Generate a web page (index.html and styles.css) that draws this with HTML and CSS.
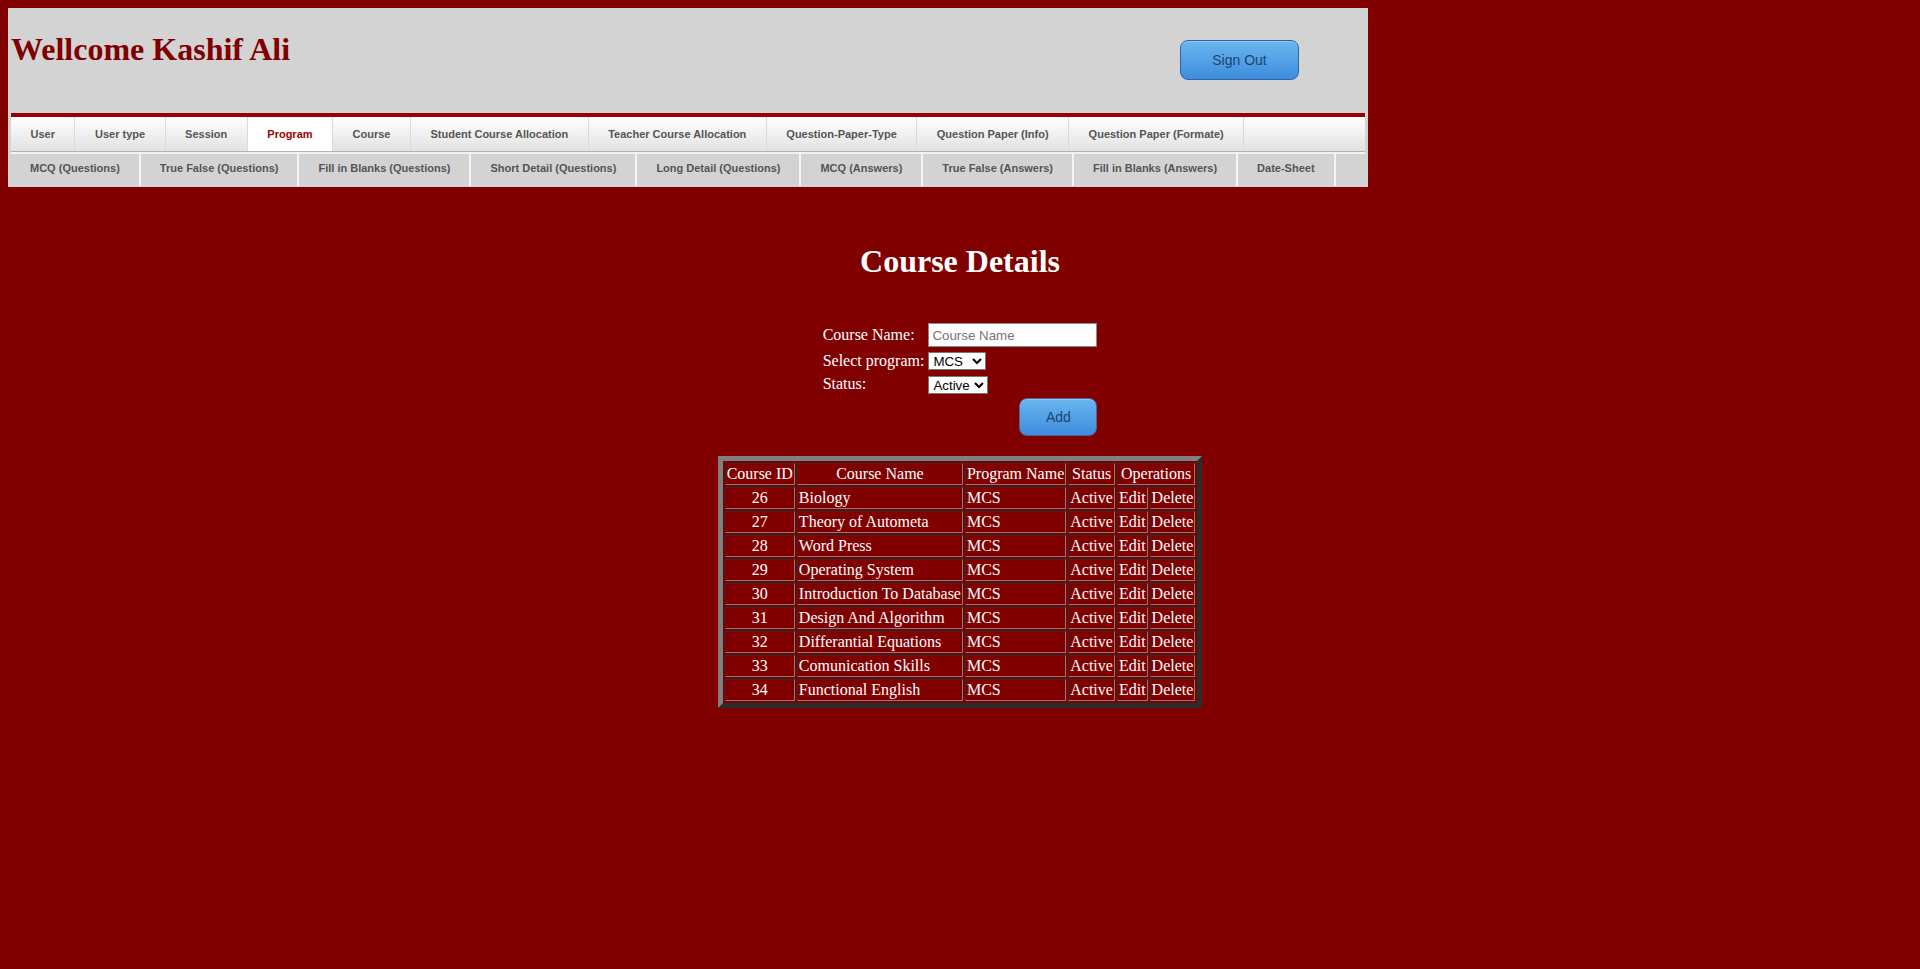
FILE: index.html
```html
<!DOCTYPE html>
<html>
<head>
<meta charset="utf-8">
<title>Course Details</title>
<link rel="stylesheet" href="styles.css">
</head>
<body>
<div class="header">
  <div class="top">
    <h1 class="welcome">Wellcome Kashif Ali</h1>
    <button class="btn signout" type="button">Sign Out</button>
  </div>
  <ul class="nav nav1">
    <li><a href="#">User</a></li>
    <li><a href="#">User type</a></li>
    <li><a href="#">Session</a></li>
    <li class="active"><a href="#">Program</a></li>
    <li><a href="#">Course</a></li>
    <li><a href="#">Student Course Allocation</a></li>
    <li><a href="#">Teacher Course Allocation</a></li>
    <li><a href="#">Question-Paper-Type</a></li>
    <li><a href="#">Question Paper (Info)</a></li>
    <li><a href="#">Question Paper (Formate)</a></li>
  </ul>
  <ul class="nav nav2">
    <li><a href="#">MCQ (Questions)</a></li>
    <li><a href="#">True False (Questions)</a></li>
    <li><a href="#">Fill in Blanks (Questions)</a></li>
    <li><a href="#">Short Detail (Questions)</a></li>
    <li><a href="#">Long Detail (Questions)</a></li>
    <li><a href="#">MCQ (Answers)</a></li>
    <li><a href="#">True False (Answers)</a></li>
    <li><a href="#">Fill in Blanks (Answers)</a></li>
    <li><a href="#">Date-Sheet</a></li>
  </ul>
</div>

<div class="content">
  <h1 class="page-title">Course Details</h1>
  <table class="form">
    <tr>
      <td>Course Name:</td>
      <td><input class="text-input" type="text" placeholder="Course Name"></td>
    </tr>
    <tr>
      <td>Select program:</td>
      <td><select class="sel sel-program"><option>MCS</option><option>BSCS</option></select></td>
    </tr>
    <tr>
      <td>Status:</td>
      <td><select class="sel sel-status"><option>Active</option><option>Block</option></select></td>
    </tr>
    <tr>
      <td></td>
      <td class="right"><button class="btn add" type="button">Add</button></td>
    </tr>
  </table>

  <table class="data">
    <tr>
      <td class="c">Course ID</td>
      <td class="c">Course Name</td>
      <td class="c">Program Name</td>
      <td class="c">Status</td>
      <td class="c" colspan="2">Operations</td>
    </tr>
    <tr><td class="c">26</td><td>Biology</td><td>MCS</td><td>Active</td><td>Edit</td><td>Delete</td></tr>
    <tr><td class="c">27</td><td>Theory of Autometa</td><td>MCS</td><td>Active</td><td>Edit</td><td>Delete</td></tr>
    <tr><td class="c">28</td><td>Word Press</td><td>MCS</td><td>Active</td><td>Edit</td><td>Delete</td></tr>
    <tr><td class="c">29</td><td>Operating System</td><td>MCS</td><td>Active</td><td>Edit</td><td>Delete</td></tr>
    <tr><td class="c">30</td><td>Introduction To Database</td><td>MCS</td><td>Active</td><td>Edit</td><td>Delete</td></tr>
    <tr><td class="c">31</td><td>Design And Algorithm</td><td>MCS</td><td>Active</td><td>Edit</td><td>Delete</td></tr>
    <tr><td class="c">32</td><td>Differantial Equations</td><td>MCS</td><td>Active</td><td>Edit</td><td>Delete</td></tr>
    <tr><td class="c">33</td><td>Comunication Skills</td><td>MCS</td><td>Active</td><td>Edit</td><td>Delete</td></tr>
    <tr><td class="c">34</td><td>Functional English</td><td>MCS</td><td>Active</td><td>Edit</td><td>Delete</td></tr>
  </table>
</div>
</body>
</html>
```

FILE: styles.css
```css
html, body {
  background: #800000;
}
body {
  margin: 8px;
  font-family: "Liberation Serif", "Times New Roman", serif;
  font-size: 16px;
  color: #ffffff;
}

.header {
  width: 1360px;
  background: #d3d3d3;
  padding-bottom: 1px;
}
.top {
  height: 105px;
  display: flex;
  align-items: flex-start;
}
.welcome {
  margin: 23px 0 0 3px;
  font-family: "Liberation Serif", "Times New Roman", serif;
  font-size: 32px;
  font-weight: bold;
  line-height: 37px;
  color: #800000;
}

.btn {
  font-family: "Liberation Sans", Arial, sans-serif;
  font-size: 14px;
  color: #1f4470;
  background: linear-gradient(#69b6f0, #3e8ddb);
  border: 1px solid #2d64a8;
  border-radius: 8px;
  padding: 0;
  cursor: pointer;
  box-shadow: inset 0 1px 0 rgba(255,255,255,0.25);
}
.signout {
  margin: 32px 69px 0 auto;
  width: 119px;
  height: 40px;
}

.nav {
  list-style: none;
  margin: 0 3px;
  padding: 0;
  display: flex;
}
.nav a {
  display: block;
  padding: 0 19.5px;
  font-family: "Liberation Sans", Arial, sans-serif;
  font-size: 11px;
  font-weight: bold;
  color: #555555;
  text-decoration: none;
  white-space: nowrap;
}
.nav1 {
  border-top: 4px solid #9b0000;
  background: linear-gradient(#ffffff, #e2e2e2);
}
.nav1 li {
  border-right: 1px solid #dadada;
}
.nav1 a {
  line-height: 34px;
}
.nav1 .active a {
  background: #ffffff;
  color: #a00000;
}
.nav2 {
  border-top: 1px solid #b2b2b2;
  box-shadow: inset 0 2px 0 #f2f2f2;
  background: #d3d3d3;
}
.nav2 li {
  border-right: 2px solid #f4f4f4;
}
.nav2 a {
  line-height: 33px;
  padding: 0 19px 1px;
}

.content {
  text-align: center;
}
.page-title {
  margin: 56px 0 0;
  font-size: 32px;
  line-height: 37px;
  font-weight: bold;
  color: #ffffff;
}

.form {
  margin: 40px auto 0;
  border-spacing: 2px;
  text-align: left;
}
.form td {
  padding: 1px;
  color: #ffffff;
}
.form .right {
  text-align: right;
}
.text-input {
  box-sizing: border-box;
  width: 169px;
  height: 24px;
  padding: 2px 3px;
  border: 1px solid #8a8a8a;
  font-family: "Liberation Sans", Arial, sans-serif;
  font-size: 13.33px;
  background: #ffffff;
  vertical-align: middle;
}
.text-input::placeholder {
  color: #757575;
}
.sel {
  height: 18px;
  font-family: "Liberation Sans", Arial, sans-serif;
  font-size: 13.33px;
  color: #000000;
  background: #ffffff;
  vertical-align: middle;
}
.sel-program {
  width: 58px;
}
.sel-status {
  width: 60px;
}
.add {
  width: 78px;
  height: 38px;
  margin-top: 0;
  border-color: #5a5ea0;
}

.data {
  margin: 17px auto 0;
  border: 5px outset #808080;
  border-spacing: 2px;
  text-align: left;
}
.data td {
  border: 1px inset #808080;
  padding: 1px;
  color: #ffffff;
  white-space: nowrap;
}
.data td.c {
  text-align: center;
}
```
